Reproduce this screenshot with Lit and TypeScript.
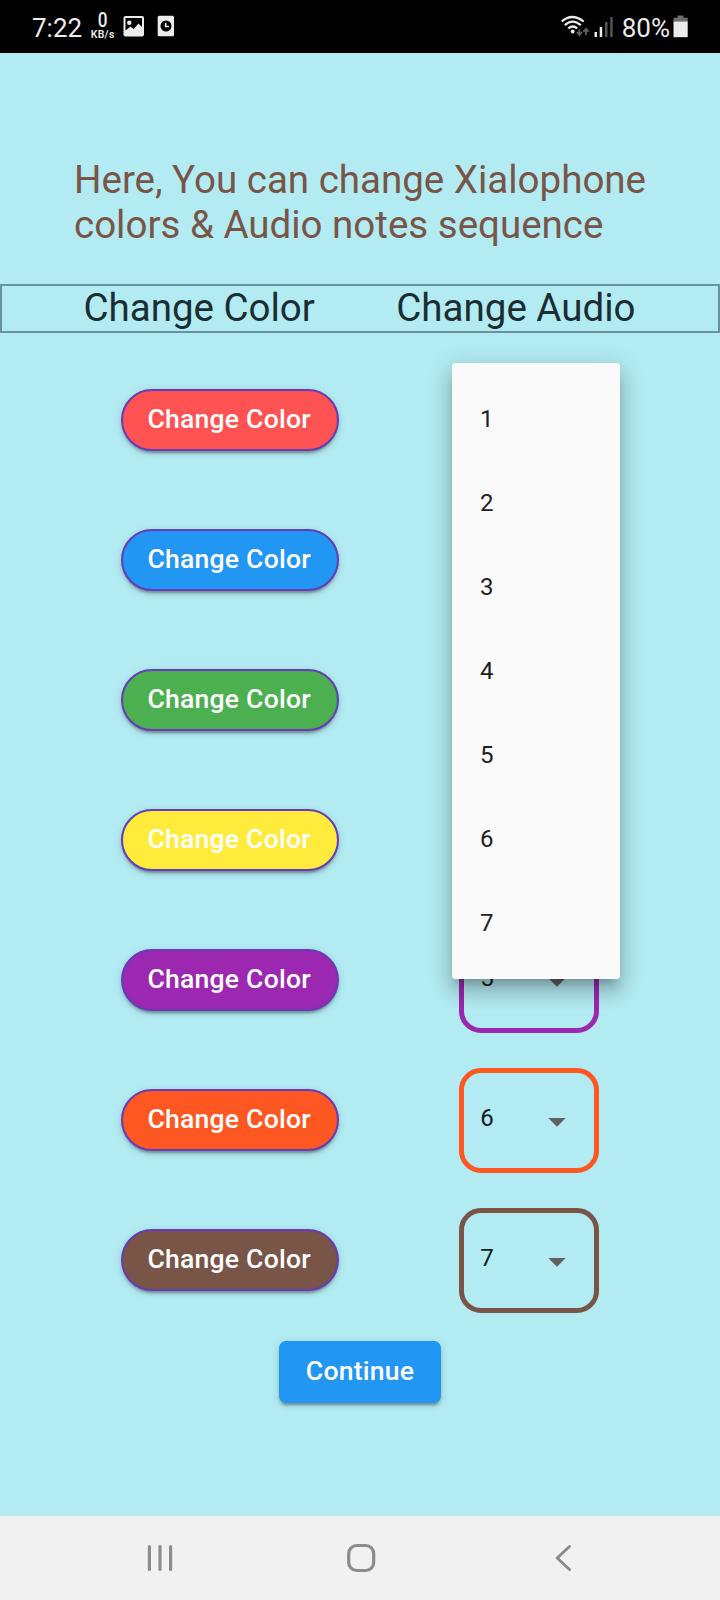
import { LitElement, html, css } from "lit";
import { customElement, property } from "lit/decorators.js";
import { styleMap } from "lit/directives/style-map.js";

const NOTES = [
  { note: 1, color: "#ff5252" },
  { note: 2, color: "#2196f3" },
  { note: 3, color: "#4caf50" },
  { note: 4, color: "#ffeb3b" },
  { note: 5, color: "#9c27b0" },
  { note: 6, color: "#ff5722" },
  { note: 7, color: "#795548" },
];

@customElement("status-bar")
class StatusBar extends LitElement {
  static styles = css`
    :host {
      display: flex;
      justify-content: space-between;
      height: 52.5px;
      background: #000;
      color: #ececec;
      font-size: 26px;
      line-height: 30px;
    }
    .side {
      display: flex;
      align-items: flex-start;
    }
    .left {
      padding-left: 32px;
    }
    .right {
      padding-right: 32px;
    }
    .text {
      padding-top: 13px;
    }
    .speed {
      display: flex;
      flex-direction: column;
      align-items: center;
      width: 26px;
      margin-left: 7.5px;
      padding-top: 13px;
      font-weight: 500;
    }
    .rate {
      font-size: 19.5px;
      line-height: 16px;
      transform: scaleX(0.88);
    }
    .unit {
      font-size: 10.5px;
      line-height: 12px;
      font-weight: 600;
      letter-spacing: 0.3px;
      white-space: nowrap;
    }
    svg {
      display: block;
    }
    .picture {
      margin: 15px 0 0 7.5px;
    }
    .clock {
      margin: 15px 0 0 12px;
    }
    .signal {
      margin: 14px 8px 0 0;
    }
    .battery {
      margin: 15px 0 0 3px;
    }
  `;
  render() {
    return html`
      <div class="side left">
        <span class="text">7:22</span>
        <div class="speed"><span class="rate">0</span><span class="unit">KB/s</span></div>
        <svg class="picture" width="22" height="22" viewBox="0 0 22 22">
          <rect x="0.5" y="1" width="20.5" height="20.5" rx="2" fill="#ececec" />
          <path d="M2.5 3h16.500v9l-3.500-3.500-5 5.500-3-2.500-5 4z" fill="#000" />
          <circle cx="6.300" cy="7.700" r="2.200" fill="#ececec" />
        </svg>
        <svg class="clock" width="18" height="22" viewBox="0 0 18 22">
          <rect x="0.700" y="0.800" width="16.300" height="20.500" rx="1.500" fill="#ececec" />
          <circle cx="9" cy="11" r="5.500" fill="#000" />
          <path d="M8.700 7.800v3.700h3.200" fill="none" stroke="#ececec" stroke-width="1.700" />
        </svg>
      </div>
      <div class="side right">
        <svg class="signal" width="54" height="24" viewBox="0 0 54 24">
          <g fill="none" stroke="#ececec" stroke-width="2.200">
            <path d="M1.700 7.500Q12 -1.500 23.800 7.500" />
            <path d="M4.800 11.200Q12.500 4 20.800 11.200" />
            <path d="M8.300 14.400Q12.700 10.600 17.200 14.400" />
          </g>
          <circle cx="12.700" cy="17.500" r="1.900" fill="#ececec" />
          <g fill="none" stroke="#606060" stroke-width="1.800">
            <path d="M19.400 15.300v6M16.900 18.200l2.500 3 2.500-3M26 21v-6M23.300 17.800l2.700-3 2.700 3" />
          </g>
          <path d="M34.500 18h2.500v5h-2.500zM39.700 13h2.500v10h-2.500z" fill="#ececec" />
          <path d="M45 8h2.500v15h-2.500zM50.200 3h2.500v20h-2.500z" fill="#555" />
        </svg>
        <span class="text">80%</span>
        <svg class="battery" width="15" height="23" viewBox="0 0 15 23">
          <path d="M4.500 0.500h6v2.200h4.200v4H0.500v-4h4z" fill="#6e6e6e" />
          <rect x="0.500" y="6.500" width="14.200" height="15.700" fill="#ececec" />
        </svg>
      </div>
    `;
  }
}

@customElement("note-select")
class NoteSelect extends LitElement {
  @property({ type: Number }) value = 1;
  @property() color = "";
  static styles = css`
    .box {
      box-sizing: border-box;
      display: flex;
      align-items: center;
      justify-content: space-between;
      width: 140px;
      height: 105px;
      padding: 0 25px 0 16px;
      border: 5.25px solid;
      border-radius: 22px;
    }
    .value {
      color: #0f2022;
      font-size: 24px;
      line-height: 28px;
      padding-bottom: 4px;
    }
    svg {
      display: block;
      margin-top: 5px;
      margin-right: 3px;
    }
  `;
  render() {
    return html`
      <div class="box" style=${styleMap({ borderColor: this.color })}>
        <span class="value">${this.value}</span>
        <svg width="18" height="9" viewBox="0 0 18 9">
          <path d="M0.300 0h17.400L9 8.750z" fill="#616161" />
        </svg>
      </div>
    `;
  }
}

@customElement("app-root")
class AppRoot extends LitElement {
  static styles = css`
    :host {
      display: flex;
      flex-direction: column;
      width: 720px;
      height: 1600px;
      overflow: hidden;
      background: #b2ebf2;
      font-family: Roboto, sans-serif;
    }
    .page {
      flex: 1;
      display: flex;
      flex-direction: column;
      align-items: center;
    }
    .intro {
      box-sizing: border-box;
      width: 100%;
      margin: 0;
      padding: 104.500px 60px 0 74px;
      color: #795548;
      font-size: 38.5px;
      line-height: 45px;
    }
    .heads {
      box-sizing: border-box;
      display: flex;
      justify-content: space-evenly;
      width: 100%;
      height: 49px;
      margin-top: 36.500px;
      padding-right: 1px;
      border: 2px solid #6a919f;
      color: #1b2d33;
      font-size: 38.5px;
      line-height: 44px;
    }
    .rows {
      width: 100%;
      margin-top: 17.5px;
      position: relative;
    }
    .row {
      display: flex;
      align-items: center;
      justify-content: space-evenly;
      height: 140px;
    }
    .button {
      box-sizing: border-box;
      display: flex;
      align-items: center;
      justify-content: center;
      height: 62px;
      padding: 0 28px 3px;
      border: 0;
      color: #fff;
      font: 500 26.6px / 31px Roboto, sans-serif;
      letter-spacing: 0.2px;
      white-space: nowrap;
      box-shadow: 0 5px 2px -3px rgba(0, 0, 0, 0.2), 0 3px 3px rgba(0, 0, 0, 0.14),
        0 2px 8px rgba(0, 0, 0, 0.12);
    }
    .pill {
      width: 218px;
      padding: 0 1px 3px 0;
      border: 2px solid #673ab7;
      border-radius: 32px;
    }
    .continue {
      width: 162px;
      margin-top: 11px;
      border-radius: 7px;
      background: #2196f3;
    }
    .menu {
      position: absolute;
      left: 452px;
      top: 13px;
      box-sizing: border-box;
      width: 168px;
      padding: 14px 0;
      border-radius: 3.5px;
      background: #fafafa;
      box-shadow: 0 9px 9px -5px rgba(0, 0, 0, 0.2), 0 14px 18px 2px rgba(0, 0, 0, 0.14),
        0 5px 25px 4px rgba(0, 0, 0, 0.12);
    }
    .item {
      display: flex;
      align-items: center;
      height: 84px;
      padding-left: 28px;
      color: #212121;
      font-size: 24px;
    }
    .nav {
      display: flex;
      height: 84px;
      background: #f1f1f1;
    }
    .nav svg {
      display: block;
    }
  `;
  render() {
    return html`
      <status-bar></status-bar>
      <main class="page">
        <p class="intro">Here, You can change Xialophone<br />colors &amp; Audio notes sequence</p>
        <div class="heads"><span>Change Color</span><span>Change Audio</span></div>
        <div class="rows">
          ${NOTES.map(
            (n) => html`
              <div class="row">
                <button class="button pill" style=${styleMap({ backgroundColor: n.color })}>
                  Change Color
                </button>
                <note-select .value=${n.note} .color=${n.color}></note-select>
              </div>
            `
          )}
          <div class="menu">
            ${NOTES.map((n) => html`<div class="item">${n.note}</div>`)}
          </div>
        </div>
        <button class="button continue">Continue</button>
      </main>
      <nav class="nav">
        <svg width="720" height="84" viewBox="0 0 720 84" fill="none" stroke="#8c8c8c"
          stroke-width="3.200" stroke-linecap="round" stroke-linejoin="round">
          <path d="M149.400 30.500v23M160 30.500v23M170.600 30.500v23" />
          <rect x="348.700" y="29.500" width="25" height="25" rx="8" />
          <path d="M569.500 30.500L557.200 42l12.300 11.500" stroke-width="3" />
        </svg>
      </nav>
    `;
  }
}
